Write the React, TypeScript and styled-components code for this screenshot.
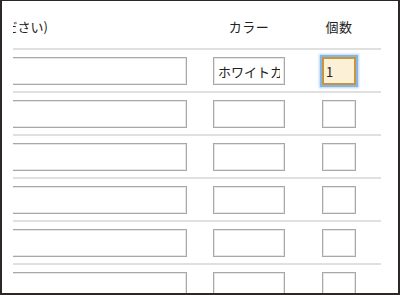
import React from "react";
import styled, { createGlobalStyle } from "styled-components";

const GlobalStyle = createGlobalStyle`
  html, body {
    margin: 0;
    padding: 0;
    background: #fff;
  }
  body {
    font-family: "Noto Sans CJK JP", "Noto Sans", "Liberation Sans", sans-serif;
    color: #222;
  }
`;

const Frame = styled.div`
  box-sizing: border-box;
  width: 400px;
  height: 295px;
  border-style: solid;
  border-color: #2d2727;
  border-width: 1px 2px 2px 2px;
  background: #fff;
  overflow: hidden;
  padding-left: 11px;
`;

const Clip = styled.div`
  width: 368px;
  height: 100%;
  overflow: hidden;
`;

const Row = styled.div<{ $header?: boolean }>`
  display: grid;
  grid-template-columns: 200px 109px 1fr;
  align-items: center;
  box-sizing: border-box;
  ${({ $header }) =>
    $header
      ? `height: 47px; padding-top: 3px;`
      : `border-top: 2px solid #e0e0e0; padding: 7px 0 6px;`}
`;

const HeaderLabel = styled.div<{ $w: number }>`
  width: ${({ $w }) => $w}px;
  display: flex;
  justify-content: center;
  font-size: 13px;
  white-space: nowrap;
  letter-spacing: 0.5px;
`;

const CutLabel = styled(HeaderLabel)`
  justify-content: flex-end;
  letter-spacing: 0;
`;

const Field = styled.input<{ $w: number; $cut?: boolean }>`
  box-sizing: border-box;
  display: block;
  width: ${({ $w }) => $w}px;
  height: 28px;
  margin: 0;
  margin-left: ${({ $cut }) => ($cut ? "-40px" : "0")};
  padding: 0 4px;
  border: 1px solid #a8a8a8;
  box-shadow: inset 0 0 0 1px #e6e6e6;
  background: #fff;
  font-family: inherit;
  font-size: 13px;
  color: #222;
  outline: none;
  border-radius: 0;
`;

const QtyField = styled(Field)<{ $active?: boolean }>`
  ${({ $active }) =>
    $active
      ? `
    background: #fcf1d6;
    border: 2px solid #c6963e;
    box-shadow: 0 0 0 2px #86b4e4, 0 0 2px 3px rgba(120, 170, 225, 0.5);
    padding: 0 2px;
  `
      : ""}
`;

const rows = [
  { color: "ホワイトカラー", qty: "1", active: true },
  { color: "", qty: "" },
  { color: "", qty: "" },
  { color: "", qty: "" },
  { color: "", qty: "" },
  { color: "", qty: "" },
];

export default function App() {
  return (
    <>
      <GlobalStyle />
      <Frame>
        <Clip>
          <Row $header>
            <CutLabel $w={35}>(ご記入ください)</CutLabel>
            <HeaderLabel $w={72}>カラー</HeaderLabel>
            <HeaderLabel $w={34}>個数</HeaderLabel>
          </Row>
          {rows.map((r, i) => (
            <Row key={i}>
              <Field $w={214} $cut readOnly value="" />
              <Field $w={72} readOnly value={r.color} />
              <QtyField $w={34} $active={r.active} readOnly value={r.qty} />
            </Row>
          ))}
        </Clip>
      </Frame>
    </>
  );
}
